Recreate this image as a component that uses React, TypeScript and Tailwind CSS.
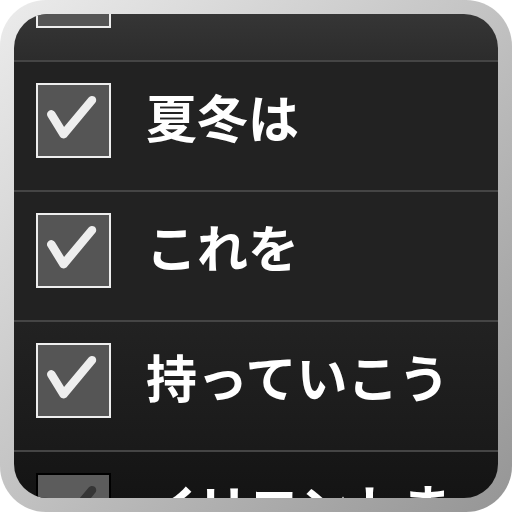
const items = [
  { label: "", bg: "bg-gradient-to-b from-[#474747] to-[#2c2c2c]", dim: false },
  { label: "夏冬は", bg: "bg-[#222222]", dim: false },
  { label: "これを", bg: "bg-[#222222]", dim: false },
  { label: "持っていこう", bg: "bg-gradient-to-b from-[#222222] to-[#1a1a1a]", dim: false },
  { label: "イリコントま", bg: "bg-gradient-to-b from-[#171717] to-[#0f0f0f]", dim: true },
];

function CheckBox({ dim }: { dim: boolean }) {
  return (
    <div
      className={`w-[75px] h-[75px] shrink-0 border-2 ${
        dim ? "border-black bg-[#5c5c5c]" : "border-[#eeeeee] bg-[#555555]"
      }`}
    >
      <svg viewBox="0 0 75 75" className="w-full h-full">
        <path
          d="M14 31 L27 52 L57 16"
          fill="none"
          stroke={dim ? "#353535" : "#eeeeee"}
          strokeWidth={9}
          strokeLinecap="round"
          strokeLinejoin="round"
        />
      </svg>
    </div>
  );
}

export default function App() {
  return (
    <div className="w-[512px] h-[512px] bg-white">
      <div className="w-full h-full rounded-[46px] p-[14px] bg-gradient-to-br from-[#ececec] via-[#c2c2c2] to-[#959595]">
        <div className="w-full h-full rounded-[34px] overflow-hidden flex flex-col">
          <div className="-mt-[82px] flex flex-col">
            {items.map((item, i) => (
              <div key={i} className="flex flex-col">
                {i > 0 && <div className="h-[2px] bg-[#454545]" />}
                <div className={`h-[128px] ${item.bg} flex items-start pl-[22px] pt-[21px]`}>
                  <CheckBox dim={item.dim} />
                  <span
                    className="ml-[35px] -mt-[4px] h-[75px] flex items-center text-[51px] leading-none font-bold text-white whitespace-nowrap"
                    style={{ fontFamily: '"Noto Sans CJK JP", "Noto Sans", sans-serif' }}
                  >
                    {item.label}
                  </span>
                </div>
              </div>
            ))}
          </div>
        </div>
      </div>
    </div>
  );
}
